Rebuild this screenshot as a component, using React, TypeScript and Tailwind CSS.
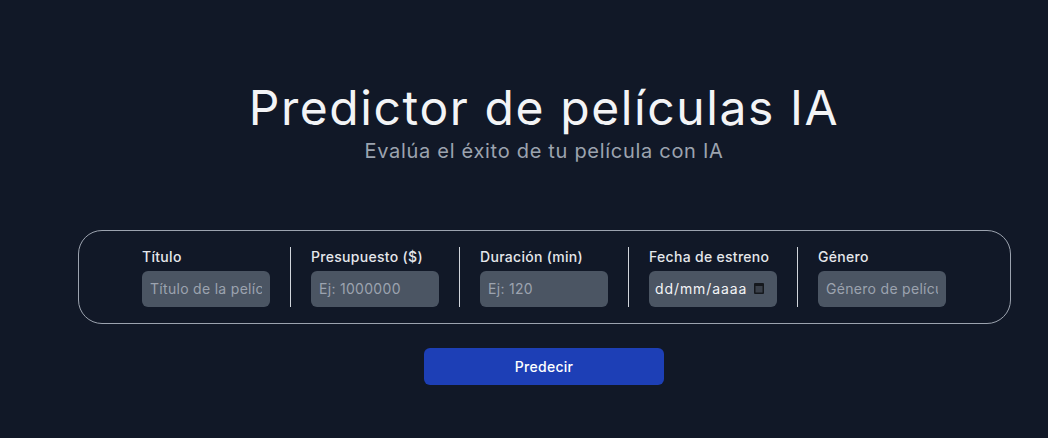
import React from "react";

const fields = [
  { label: "Título", placeholder: "Título de la película" },
  { label: "Presupuesto ($)", placeholder: "Ej: 1000000" },
  { label: "Duración (min)", placeholder: "Ej: 120" },
  { label: "Fecha de estreno", date: true },
  { label: "Género", placeholder: "Género de película" },
];

export default function App() {
  return (
    <div
      className="min-h-[438px] w-full bg-[#111827] pl-[40px] text-white"
      style={{ fontFamily: "Inter, 'Noto Sans', sans-serif" }}
    >
      <div className="flex flex-col items-center pt-[79px]">
        <h1 className="text-[48px] font-normal leading-[1.2] tracking-[1.6px] text-[#f3f4f6]">
          Predictor de películas IA
        </h1>
        <p className="mt-0 text-[20px] leading-[1.4] tracking-[0.7px] text-[#9ca3af]">
          Evalúa el éxito de tu película con IA
        </p>
        <div className="mt-[65px] flex w-[933px] justify-center rounded-3xl border border-[#9ca3af] py-4">
          {fields.map((f, i) => (
            <React.Fragment key={f.label}>
              {i > 0 && <div className="mx-5 w-px self-stretch bg-[#d1d5db]" />}
              <div className="flex w-[128px] flex-col">
                <label className="h-5 text-[14px] font-medium leading-5 tracking-[0.3px] text-[#e5e7eb]">
                  {f.label}
                </label>
                {f.date ? (
                  <div className="mt-1 flex h-9 w-full items-center justify-between rounded-md bg-[#4b5563] pl-[6px] pr-[13px] text-[14px] text-[#f3f4f6]">
                    <span className="tracking-[0.9px]">dd/mm/aaaa</span>
                    <svg width="10" height="11" viewBox="0 0 10 11">
                      <rect x="0" y="0" width="10" height="11" rx="1" fill="#15181d" />
                      <rect x="1.5" y="3" width="7" height="6.5" fill="#3a404a" />
                    </svg>
                  </div>
                ) : (
                  <input
                    className="mt-1 h-9 w-full rounded-md bg-[#4b5563] px-2 text-[14px] tracking-[0.3px] text-white placeholder:text-[#9ca3af] outline-none"
                    placeholder={f.placeholder}
                  />
                )}
              </div>
            </React.Fragment>
          ))}
        </div>
        <button className="mt-6 h-[37px] w-[240px] rounded-md bg-[#1d3fb6] text-[14px] font-medium tracking-[0.3px] text-white">
          Predecir
        </button>
      </div>
    </div>
  );
}
